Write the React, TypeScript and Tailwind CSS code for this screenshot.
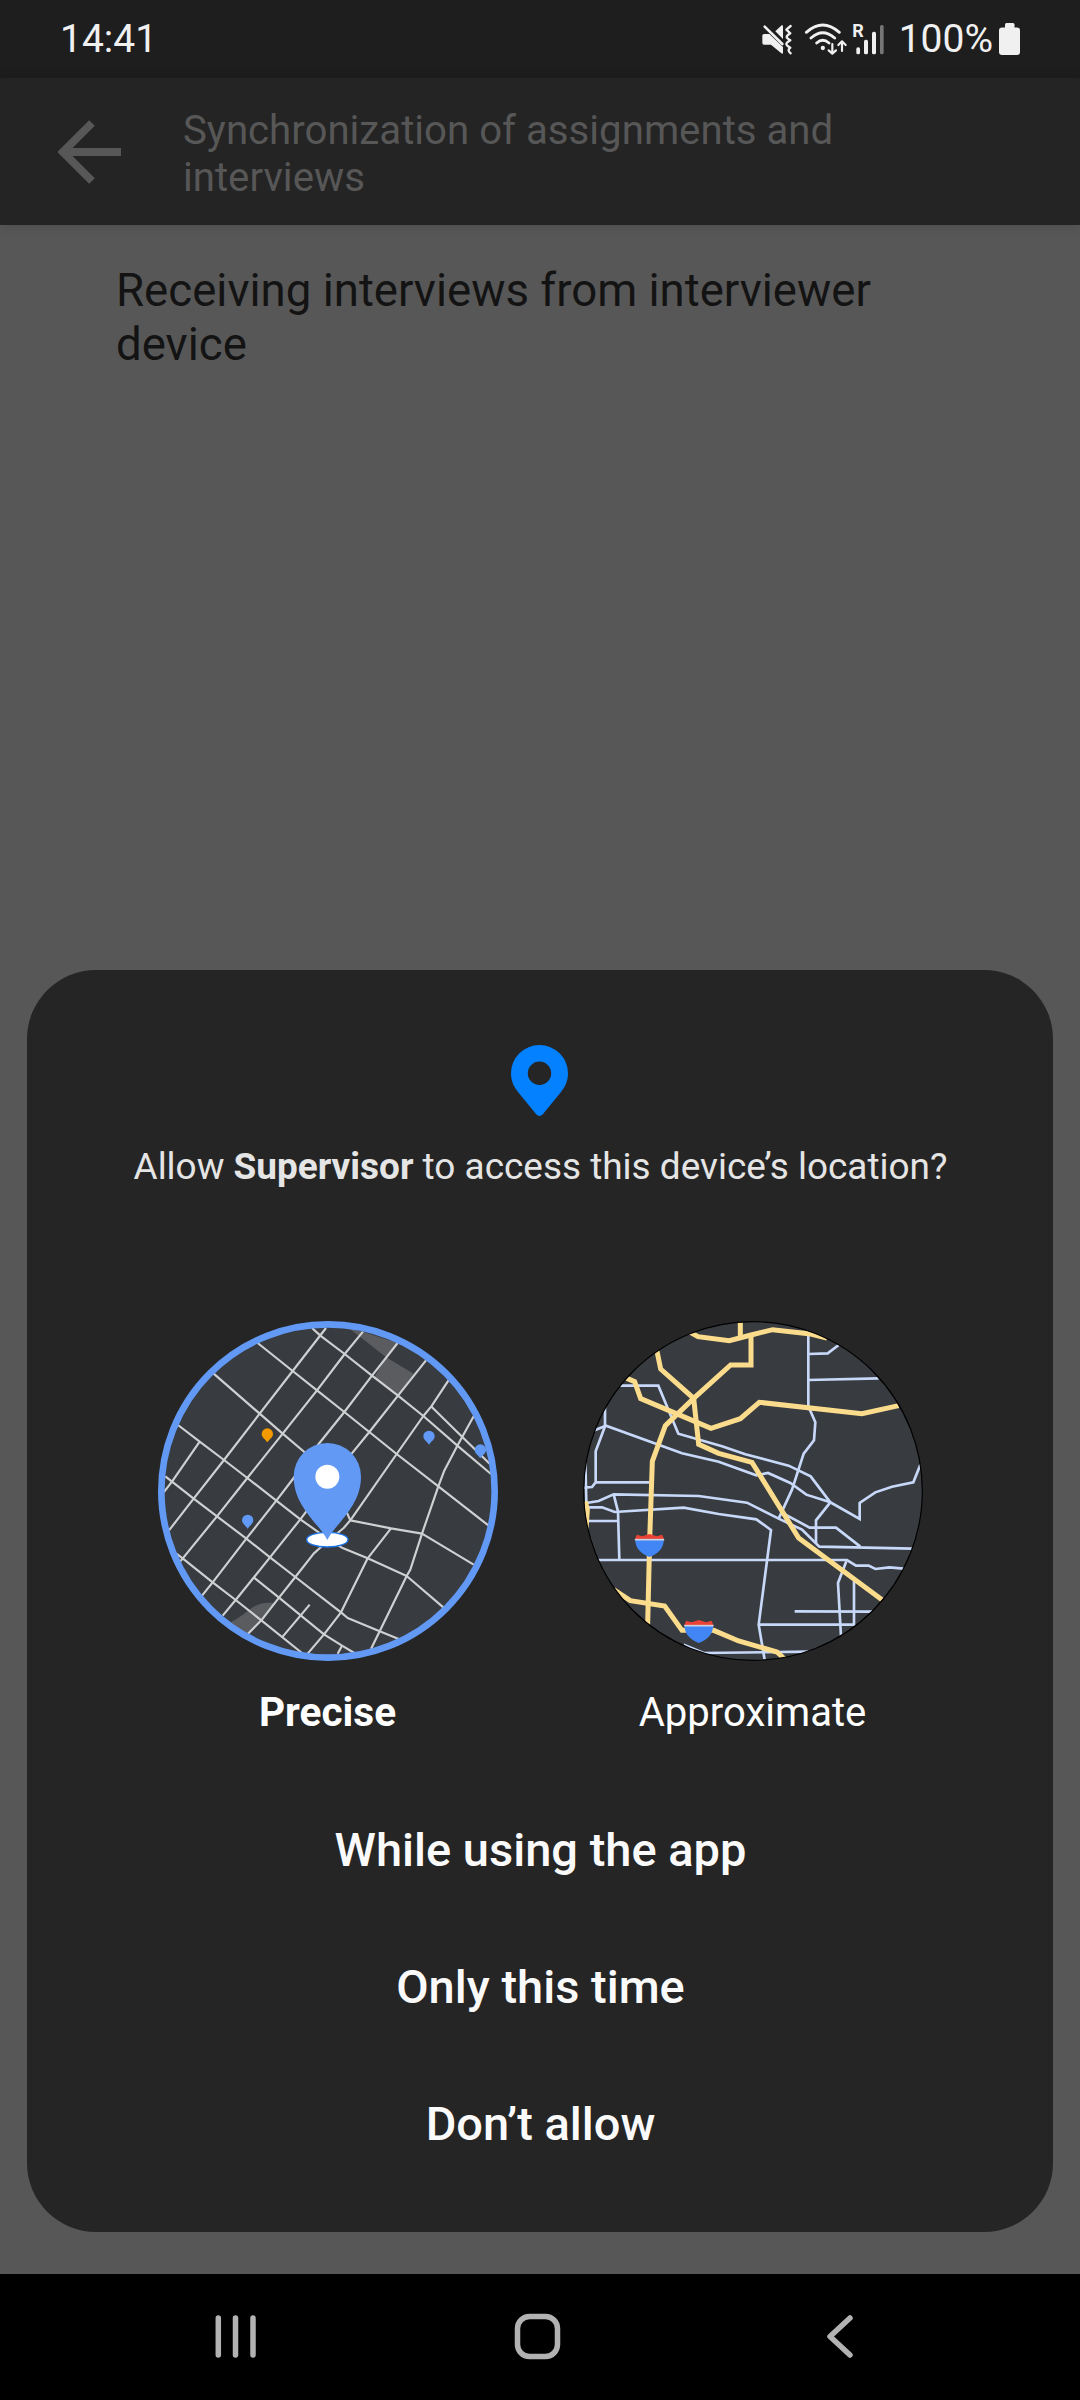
const roads = [
  '485,55 510,78 583,133 665,198 743,258 819,319 921,408 1022,493',
  '322,100 427,184 500,242 582,307 657,367 739,433 864,530 1015,648',
  '190,192 328,312 397,372 462,427 520,480',
  '83,346 148,396 221,451 291,505 378,573 450,629 505,668 530,690 575,714 652,746 769,799 879,893',
  '45,500 65,516 130,567 200,620 288,687 359,743 435,802 510,860 572,908 592,925 688,965 745,988',
  '78,732 97,746 187,818 256,871 333,932 455,1030',
  '310,803 386,864 451,917 521,974 575,1008 612,1030',
  '527,55 427,184 328,312 221,451 130,567 56,662',
  '148,396 65,516 40,548',
  '638,66 583,133 500,242 397,372 291,505 200,620 90,755',
  '742,100 665,198 582,307 505,403 430,505 378,573 288,687 187,818 155,858',
  '827,152 743,258 657,367 604,432 468,605 450,629 359,743 256,871 217,918',
  '894,213 843,290 819,319 739,433 600,632 580,655 512,712 490,732 435,802 386,864 333,932 293,972',
  '970,320 921,408 881,485 864,530 815,672 780,780 769,799 688,965 662,1018',
  '722,656 652,746 572,908 521,974 472,1032',
  '575,1008 562,1032',
  '397,981 451,917 478,885',
  '842,290 936,382 1018,462',
  '588,605 600,632 722,656 815,672 970,765',
];

const streets = [
  '130,228 249,228 309,372 440,410 510,434 640,468 706,500 765,578',
  '89,290 89,350 61,425 61,518 50,532 25,534',
  '58,362 92,348 320,431 430,456 543,497 578,490 645,520 693,555 765,578 853,628 853,580 900,548 950,531 1014,518 1035,465',
  '61,518 222,518',
  '30,455 33,580',
  '33,580 70,574 115,554 370,559 515,579 610,627 680,660 732,711 1010,717',
  '35,593 80,593 118,607 325,594 430,613 543,629 587,661 550,945 568,1050',
  '115,554 128,605 132,750',
  '35,634 128,634',
  '65,751 815,751 842,768 880,768 900,778 942,773 985,777',
  '699,75 699,290 720,338 716,392 685,432 650,540 610,627',
  '699,133 757,131 790,106',
  '699,211 910,206',
  '625,612 703,654 782,654 855,711',
  '765,578 722,632 722,700',
  '813,755 788,820 797,980',
  '836,815 836,945 550,945',
  '658,905 890,906',
  '325,1005 385,1030 700,1026',
];

const highways = [
  '345,68 368,81 462,93 527,76 592,60 700,72 755,85',
  '495,35 495,85',
  '527,75 527,166 466,166 355,266 270,348 231,455 223,690 217,945',
  '245,125 256,178 355,266 370,404 430,431 530,458 670,685 920,870',
  '150,204 178,216 196,267 310,315 407,356 495,327 552,278 860,312 970,288',
  '115,840 165,873 268,889 320,962 415,962 490,994 605,1027 628,1048',
  '30,575 36,600 32,660',
];

function SmallPin({ x, y, fill }: { x: number; y: number; fill: string }) {
  return (
    <path
      transform={`translate(${x} ${y})`}
      d="M0 25C-7 15-17 10-17 0A17 17 0 0 1 17 0C17 10 7 15 0 25Z"
      fill={fill}
    />
  );
}

function PreciseMap() {
  return (
    <svg viewBox="23 34 1020 1020" className="h-[340px] w-[340px]">
      <defs>
        <clipPath id="precise"><circle cx="533" cy="544" r="500" /></clipPath>
      </defs>
      <circle cx="533" cy="544" r="505" fill="#383b40" />
      <g clipPath="url(#precise)">
        <path d="M595 55L638 66L742 100L706 142L650 98Z" fill="#5b5c5f" />
        <path d="M706 142L790 192L743 258L673 202Z" fill="#5b5c5f" />
        <path d="M225 945C300 915 300 872 373 880L333 932L280 990Z" fill="#5b5c5f" />
        <g fill="none" stroke="#cfd0d2" strokeWidth="6.500" strokeLinejoin="round">
          {roads.map((p) => <polyline key={p} points={p} />)}
        </g>
        <SmallPin x={990} y={421} fill="#6199f5" />
      </g>
      <SmallPin x={351} y={373} fill="#f29900" />
      <SmallPin x={292} y={632} fill="#6199f5" />
      <SmallPin x={836} y={380} fill="#6199f5" />
      <ellipse cx="531" cy="690" rx="62" ry="22" fill="#fff" stroke="#1a73e8" strokeWidth="4" />
      <path d="M531 691C505 640 430 590 430 501A101 101 0 0 1 632 501C632 590 557 640 531 691Z" fill="#6199f5" />
      <circle cx="531" cy="501" r="36" fill="#fff" />
      <circle cx="533" cy="544" r="500" fill="none" stroke="#6199f5" strokeWidth="20" />
    </svg>
  );
}

function Shield({ x, y }: { x: number; y: number }) {
  return (
    <g transform={`translate(${x} ${y})`}>
      <path d="M-43 14C-43 42-24 58 0 67C24 58 43 42 43 14Z" fill="#4285f4" />
      <path d="M-44 14L-38 0L-22 5L0-2L22 5L38 0L44 14Z" fill="#ea4335" />
      <path d="M-44 15H44" stroke="#c9d3e4" strokeWidth="5" />
    </g>
  );
}

function ApproximateMap() {
  return (
    <svg viewBox="23 34 1020 1020" className="h-[340px] w-[340px]">
      <defs>
        <clipPath id="approximate"><circle cx="533" cy="544" r="508" /></clipPath>
      </defs>
      <circle cx="533" cy="544" r="508" fill="#383c40" />
      <g clipPath="url(#approximate)" fill="none">
        <g stroke="#c8d8f8" strokeWidth="8">
          {streets.map((p) => <polyline key={p} points={p} />)}
        </g>
        <g stroke="#fbdc8c" strokeWidth="15">
          {highways.map((p) => <polyline key={p} points={p} />)}
        </g>
      </g>
      <Shield x={222.5} y={675} />
      <Shield x={370.5} y={933} />
      <circle cx="533" cy="544" r="508" fill="none" stroke="#000" strokeWidth="3.5" />
    </svg>
  );
}

function StatusIcons() {
  return (
    <svg viewBox="60 60 378 108" className="h-[36px] w-[126px]">
      <g fill="#f0f0f0">
        <path d="M106 91L125 73Q129 71 129 76V114Z" />
        <path d="M72 99H88L129 138V155Q129 160 124 157L93 131H72Q67 131 67 126V104Q67 99 72 99Z" />
        <circle cx="248.500" cy="141" r="6.500" />
        <text x="336.500" y="109" fontSize="54" fontWeight="700" fontFamily="Roboto, sans-serif">R</text>
        <rect x="349" y="139" width="11" height="21" rx="5" />
        <rect x="372" y="116" width="12" height="44" rx="5" />
        <rect x="396" y="92" width="12" height="68" rx="5" />
        <rect x="420" y="72" width="11" height="88" rx="5" fill="#767676" />
      </g>
      <g fill="none" stroke="#f0f0f0" strokeLinecap="round" strokeLinejoin="round">
        <path d="M74 77L127 129" strokeWidth="8" />
        <path d="M152 75L139 86L151 97Q140 104 140 108Q140 111 151 118Q139 125 139 129Q139 133 151 140Q140 147 152 157" strokeWidth="7" />
        <path d="M199 94Q248 50 298 94M213 111Q248 79 284 111M230 126Q248 110 267 126" strokeWidth="8.500" />
        <path d="M277 129V157M266 148L277 158L288 148M306 150V123M295 132L306 121L317 132" strokeWidth="6.500" />
      </g>
    </svg>
  );
}

export default function App() {
  return (
    <div className="relative flex h-[2400px] w-[1080px] flex-col overflow-hidden bg-[#575757] font-['Roboto',sans-serif]">
      <div className="flex h-[78px] items-center justify-between bg-[#1e1e1e] pr-[60px] pl-[60px] text-[39px] leading-[46px] text-[#f0f0f0]">
        <span>14:41</span>
        <div className="flex items-center">
          <StatusIcons />
          <span className="ml-[13px]">100%</span>
          <svg viewBox="0 0 21 32" className="ml-[6px] h-8 w-[21px]" fill="#f0f0f0">
            <rect x="6" width="9.500" height="8" rx="1.500" />
            <rect y="4.400" width="21" height="27.600" rx="3" />
          </svg>
        </div>
      </div>
      <header className="relative flex h-[147px] items-center bg-[#242424] shadow-[0_0_12px_rgba(0,0,0,0.15)]">
        <svg viewBox="0 0 64 64" className="ml-[58px] h-[64px] w-[64px] shrink-0" fill="none" stroke="#575757" strokeWidth="8">
          <path d="M63 32H7M34 3L5 32L34 61" />
        </svg>
        <h1 className="ml-[61px] w-[700px] pt-[5px] text-[40.2px] leading-[47px] text-[#575757]">
          Synchronization of assignments and interviews
        </h1>
      </header>
      <main className="flex-1 px-[116px] pt-[39px]">
        <p className="w-[800px] text-[45.6px] leading-[54px] text-[#131313]">
          Receiving interviews from interviewer device
        </p>
      </main>
      <section className="mx-[27px] mb-[42px] flex h-[1262px] flex-col items-center rounded-[69px] bg-[#252525]">
        <svg viewBox="0 0 57 72" className="mt-[75px] mr-[2px] h-[72px] w-[57px]" fill="#0381fe">
          <path fillRule="evenodd" d="M28.500 0A28.500 28.500 0 0 1 57 28.500C57 36 54 42 50 47L32 69Q28.500 73 25 69L7 47C3 42 0 36 0 28.500A28.500 28.500 0 0 1 28.500 0ZM28.500 16.600A11.700 11.700 0 1 0 28.500 40A11.700 11.700 0 1 0 28.500 16.600Z" />
        </svg>
        <p className="mt-[28px] ml-[1px] text-[36.95px] leading-[44px] whitespace-nowrap text-[#e5e5e5]">
          Allow <b className="font-bold">Supervisor</b> to access this device’s location?
        </p>
        <div className="mt-[132px] flex justify-center gap-[85px]">
          <div className="flex flex-col items-center">
            <PreciseMap />
            <span className="mt-[27px] text-[40.6px] leading-[48px] font-bold text-white">Precise</span>
          </div>
          <div className="flex flex-col items-center">
            <ApproximateMap />
            <span className="mt-[28px] text-[40.1px] leading-[48px] text-white">Approximate</span>
          </div>
        </div>
        <div className="mt-[45px] ml-px flex flex-col items-center text-[47px] font-medium text-[#fafafa]">
          <button className="h-[137px]">While using the app</button>
          <button className="h-[137px]">Only this time</button>
          <button className="h-[137px]">Don’t allow</button>
        </div>
      </section>
      <nav className="h-[126px] bg-black">
        <svg viewBox="0 0 1080 126" className="h-[126px] w-[1080px]" fill="none" stroke="#b2b2b2" strokeWidth="5.500" strokeLinecap="round" strokeLinejoin="round">
          <path d="M218.300 44V81M235.500 44V81M253 44V81" />
          <rect x="517.500" y="42.500" width="40" height="40" rx="12" />
          <path d="M850 44L830 62.500L850 81" />
        </svg>
      </nav>
    </div>
  );
}
